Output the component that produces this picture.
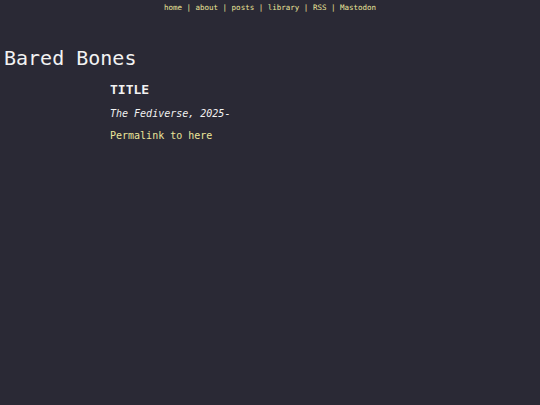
export default function App() {
  return (
    <div
      className="min-h-[405px] bg-[#2a2935] text-[#f2f2f2]"
      style={{ fontFamily: '"DejaVu Sans Mono", "Liberation Mono", monospace' }}
    >
      <nav className="pt-[3px] text-center text-[7.5px] leading-[10px] text-[#ebe59a]">
        home | about | posts | library | RSS | Mastodon
      </nav>
      <h1 className="mt-[33px] pl-[4px] text-[20px] leading-[24px]">Bared Bones</h1>
      <main className="pl-[110px] mt-[12px]">
        <h2 className="text-[13px] leading-[16px] font-bold">TITLE</h2>
        <p className="mt-[9px] text-[10px] leading-[14px] italic">The Fediverse, 2025-</p>
        <a className="mt-[8px] block text-[10px] leading-[14px] text-[#ebe59a]">Permalink to here</a>
      </main>
    </div>
  );
}
